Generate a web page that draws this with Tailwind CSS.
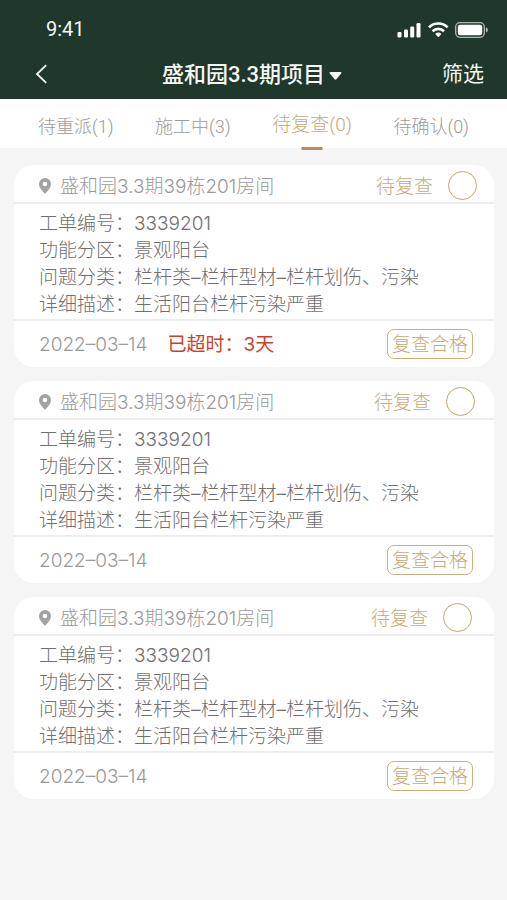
<!DOCTYPE html>
<html lang="zh-CN">
<head>
<meta charset="utf-8">
<meta name="viewport" content="width=device-width, initial-scale=1">
<title>盛和园3.3期项目</title>
<script src="https://cdn.jsdelivr.net/npm/@tailwindcss/browser@4"></script>
</head>
<body class="min-h-screen bg-[#f5f5f5] font-['Inter','Noto_Sans_CJK_SC',sans-serif] text-[19px] font-light text-[#6f6f6f]">

<header class="bg-[#20372b] text-[#f4f8f5]">
  <div class="flex h-12 items-end justify-between pr-[18px] pl-[46px]">
    <time class="font-['Roboto',sans-serif] text-[20px] leading-[38px] font-normal">9:41</time>
    <svg class="mb-2 h-[20px] w-[92px]" viewBox="0 0 92 20" fill="none" aria-hidden="true">
      <g fill="#fff">
        <rect x="0.5" y="12" width="4" height="5.5" rx="1.2"/>
        <rect x="7" y="9.5" width="4" height="8" rx="1.2"/>
        <rect x="13.2" y="6.5" width="4" height="11" rx="1.2"/>
        <rect x="19.5" y="3" width="4" height="14.5" rx="1.2"/>
      </g>
      <g stroke="#fff" stroke-width="2.6">
        <path d="M32 7.4a13.2 13.2 0 0 1 18.6 0"/>
        <path d="M35.6 11.2a8.2 8.2 0 0 1 11.4 0"/>
      </g>
      <path fill="#fff" d="M38.2 13.9a4.6 4.6 0 0 1 6.2 0l-3.1 3.3z"/>
      <rect x="58.7" y="2.7" width="28.6" height="14.6" rx="4.2" stroke="#fff" stroke-opacity=".65" stroke-width="1.3"/>
      <rect x="60.8" y="4.8" width="24.4" height="10.4" rx="2.2" fill="#fff"/>
      <path fill="#fff" fill-opacity=".75" d="M89 7.6c2.4 1 2.4 3.8 0 4.8z"/>
    </svg>
  </div>
  <div class="grid h-[51px] grid-cols-[1fr_auto_1fr] items-center pr-[23px] pl-[34px]">
    <button type="button" aria-label="返回" class="justify-self-start">
      <svg class="h-5 w-4" viewBox="0 0 16 20" fill="none" stroke="currentColor" stroke-width="1.8" aria-hidden="true"><path d="M12.2 1.2 3 10l9.2 8.8"/></svg>
    </button>
    <button type="button" class="flex items-center gap-1 pt-[2px] pr-[14px] font-['Roboto','Noto_Sans_CJK_SC',sans-serif] text-[22px] font-medium">
      盛和园3.3期项目
      <svg class="mt-[2px] h-2 w-[13px]" viewBox="0 0 13 8" fill="currentColor" aria-hidden="true"><path d="M1.2 0h10.6q1.2 0.3.4 1.4L7.4 7.3q-.9.9-1.8 0L.8 1.4Q0 .3 1.2 0z"/></svg>
    </button>
    <button type="button" class="justify-self-end text-[21px] font-normal">筛选</button>
  </div>
</header>

<nav class="flex h-[49px] items-center justify-between bg-white pt-[6px] pr-[38px] pl-[38px] font-['Roboto','Noto_Sans_CJK_SC',sans-serif] text-[18px] text-[#9b9b9b]">
  <a href="#reassign">待重派(1)</a>
  <a href="#working">施工中(3)</a>
  <a href="#review" aria-current="page" class="relative flex h-full items-center pb-[2px] text-[19px] text-[#c4ab78]">待复查(0)<span class="absolute -bottom-[2px] left-1/2 h-[3px] w-[21px] -translate-x-1/2 bg-[#b98a5c]"></span></a>
  <a href="#confirm">待确认(0)</a>
</nav>

<main class="flex flex-col gap-[14px] pt-[17px] pr-[13px] pb-6 pl-[14px]">

  <article class="rounded-[20px] bg-white">
    <div class="flex h-[39px] items-center border-b-2 border-[#ececec] pt-1 pr-[17px] pl-[25px] text-[#999]">
      <svg class="mr-[9px] h-4 w-3" viewBox="0 0 12 16" aria-hidden="true"><path fill="#a3a3a3" fill-rule="evenodd" d="M6 0a6 6 0 0 1 6 6c0 4-4 7.6-6 10C4 13.6 0 10 0 6a6 6 0 0 1 6-6zm0 3.7a2.3 2.3 0 1 0 0 4.6 2.3 2.3 0 0 0 0-4.6z"/></svg>
      <h2 class="pt-[3px]">盛和园3.3期39栋201房间</h2>
      <label for="pick1" class="ml-auto pt-[3px] text-[#c4ab78]">待复查</label>
      <input id="pick1" type="checkbox" class="ml-[15px] size-[29px] appearance-none rounded-full border border-[#bfa670] checked:bg-[#cbb98c]">
    </div>
    <dl class="grid grid-cols-[auto_1fr] px-[25px] pt-[6px] pb-px leading-[27px]">
      <dt>工单编号：</dt><dd>3339201</dd>
      <dt>功能分区：</dt><dd>景观阳台</dd>
      <dt>问题分类：</dt><dd>栏杆类–栏杆型材–栏杆划伤、污染</dd>
      <dt>详细描述：</dt><dd>生活阳台栏杆污染严重</dd>
    </dl>
    <div class="flex h-12 items-center border-t-2 border-[#ececec] pr-[21px] pl-[25px]">
      <time datetime="2022-03-14" class="pt-[2px] text-[#999]">2022–03–14</time>
      <strong class="ml-5 pt-[2px] font-normal text-[#cf3f2c]">已超时：3天</strong>
      <button type="button" class="ml-auto h-[30px] rounded-[7px] border border-[#c9b07c] px-1 pt-[2px] leading-[26px] text-[#c4ab78]">复查合格</button>
    </div>
  </article>

  <article class="rounded-[20px] bg-white">
    <div class="flex h-[39px] items-center border-b-2 border-[#ececec] pt-1 pr-[19px] pl-[25px] text-[#999]">
      <svg class="mr-[9px] h-4 w-3" viewBox="0 0 12 16" aria-hidden="true"><path fill="#a3a3a3" fill-rule="evenodd" d="M6 0a6 6 0 0 1 6 6c0 4-4 7.6-6 10C4 13.6 0 10 0 6a6 6 0 0 1 6-6zm0 3.7a2.3 2.3 0 1 0 0 4.6 2.3 2.3 0 0 0 0-4.6z"/></svg>
      <h2 class="pt-[3px]">盛和园3.3期39栋201房间</h2>
      <label for="pick2" class="ml-auto pt-[3px] text-[#c4ab78]">待复查</label>
      <input id="pick2" type="checkbox" class="ml-[15px] size-[29px] appearance-none rounded-full border border-[#bfa670] checked:bg-[#cbb98c]">
    </div>
    <dl class="grid grid-cols-[auto_1fr] px-[25px] pt-[6px] pb-px leading-[27px]">
      <dt>工单编号：</dt><dd>3339201</dd>
      <dt>功能分区：</dt><dd>景观阳台</dd>
      <dt>问题分类：</dt><dd>栏杆类–栏杆型材–栏杆划伤、污染</dd>
      <dt>详细描述：</dt><dd>生活阳台栏杆污染严重</dd>
    </dl>
    <div class="flex h-12 items-center border-t-2 border-[#ececec] pr-[21px] pl-[25px]">
      <time datetime="2022-03-14" class="pt-[2px] text-[#999]">2022–03–14</time>
      <button type="button" class="ml-auto h-[30px] rounded-[7px] border border-[#c9b07c] px-1 pt-[2px] leading-[26px] text-[#c4ab78]">复查合格</button>
    </div>
  </article>

  <article class="rounded-[20px] bg-white">
    <div class="flex h-[39px] items-center border-b-2 border-[#ececec] pt-1 pr-[22px] pl-[25px] text-[#999]">
      <svg class="mr-[9px] h-4 w-3" viewBox="0 0 12 16" aria-hidden="true"><path fill="#a3a3a3" fill-rule="evenodd" d="M6 0a6 6 0 0 1 6 6c0 4-4 7.6-6 10C4 13.6 0 10 0 6a6 6 0 0 1 6-6zm0 3.7a2.3 2.3 0 1 0 0 4.6 2.3 2.3 0 0 0 0-4.6z"/></svg>
      <h2 class="pt-[3px]">盛和园3.3期39栋201房间</h2>
      <label for="pick3" class="ml-auto pt-[3px] text-[#c4ab78]">待复查</label>
      <input id="pick3" type="checkbox" class="ml-[15px] size-[29px] appearance-none rounded-full border border-[#bfa670] checked:bg-[#cbb98c]">
    </div>
    <dl class="grid grid-cols-[auto_1fr] px-[25px] pt-[6px] pb-px leading-[27px]">
      <dt>工单编号：</dt><dd>3339201</dd>
      <dt>功能分区：</dt><dd>景观阳台</dd>
      <dt>问题分类：</dt><dd>栏杆类–栏杆型材–栏杆划伤、污染</dd>
      <dt>详细描述：</dt><dd>生活阳台栏杆污染严重</dd>
    </dl>
    <div class="flex h-12 items-center border-t-2 border-[#ececec] pr-[21px] pl-[25px]">
      <time datetime="2022-03-14" class="pt-[2px] text-[#999]">2022–03–14</time>
      <button type="button" class="ml-auto h-[30px] rounded-[7px] border border-[#c9b07c] px-1 pt-[2px] leading-[26px] text-[#c4ab78]">复查合格</button>
    </div>
  </article>

</main>
</body>
</html>
